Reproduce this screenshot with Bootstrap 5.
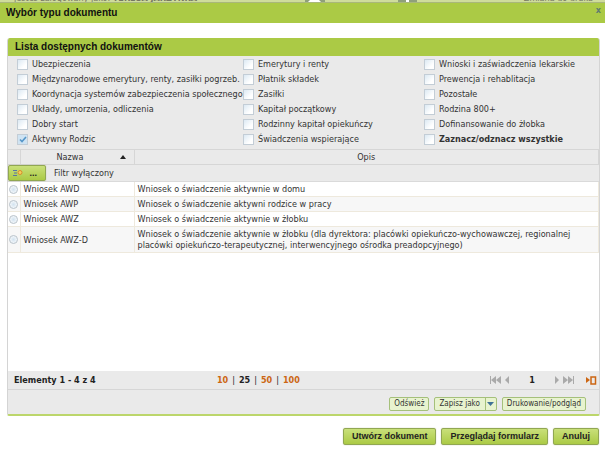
<!DOCTYPE html>
<html lang="pl">
<head>
<meta charset="utf-8">
<meta name="viewport" content="width=device-width, initial-scale=1">
<title>Wybór typu dokumentu</title>
<link rel="stylesheet" href="https://cdn.jsdelivr.net/npm/bootstrap@5.3.0/dist/css/bootstrap.min.css">
<style>
body{font:9px/11px "DejaVu Sans Condensed","DejaVu Sans",sans-serif;color:#333;background:#fff}
.backdrop-strip{height:3px;background:#cfdc9c;color:#75795f;line-height:8px;padding:0 12px 0 14px;border-bottom:1px solid #a9b77b}
.dialog-title{height:20px;background:#abca45;color:#111;padding:0 4px 0 6px}
.dialog-title h1,.panel-title{font:700 10px/18px "Liberation Sans",sans-serif;margin:0}
.dialog-title h1{line-height:20px}
.close-x{font-size:9px;line-height:14px;color:#5f7a70}
.doc-panel{margin:15px 5px 0 7px;border:1px solid #d4d4d4;border-top:0;border-bottom:2px solid #bcd66b;border-radius:3px 3px 2px 2px;overflow:hidden;background:#eaeaea}
.doc-panel .panel-title{background:#abca45;color:#111;padding:0 7px}
.type-grid{display:grid;grid-template-columns:226fr 181fr 175fr;padding:1px 0 2px 9px}
.type-grid label{display:flex;align-items:center;gap:4px;height:15px;white-space:nowrap}
.tick{appearance:none;flex:none;width:11px;height:11px;margin:0;border:1px solid #c3cdd6;background:linear-gradient(135deg,#dce9f3,#fff 70%)}
.tick:checked{background:#cfe3f2 url("data:image/svg+xml,%3Csvg xmlns='http://www.w3.org/2000/svg' viewBox='0 0 9 9'%3E%3Cpath d='M2 4.5l2 2 4-4.5' fill='none' stroke='%235596c8' stroke-width='1.6'/%3E%3C/svg%3E")}
.doc-table{table-layout:fixed;width:100%;background:#fff;margin:0}
.doc-table th{height:15px;background:#eaeaea;border:1px solid #d6d6d6;border-left-width:0;font-weight:400;text-align:center;padding:0;line-height:12px}
.doc-table td{border:1px solid #eee9dd;border-left-width:0;padding:2px 3px 1px;line-height:11px}
.doc-table tbody tr:nth-child(even) td{background:#f7f7f7}
.doc-table .pick{padding:0;text-align:center;vertical-align:middle}
.doc-table .filter-cell{background:#eaeaea;border:0;border-bottom:1px solid #dadada;padding:0}
.c-pick{width:12px}.c-name{width:114px}
.pick input{appearance:none;display:block;width:9px;height:9px;margin:0 auto;border:1px solid #b9c3cb;border-radius:50%;background:radial-gradient(#d2e2ef,#fff)}
.green-btn{border:1px solid #91a752;border-radius:2px;background:linear-gradient(#c9e07a,#abca45);color:#222;font:700 9px/13px "Liberation Sans",sans-serif;padding:1px 8px;box-shadow:0 0 1px #9aa56d}
.filter-btn{width:38px;height:16px;padding:0 8px 0 4px;margin-right:8px}
.pager{height:19px;background:#eaeaea;border-bottom:1px solid #d6d6d6;color:#222;font-weight:700;padding:0 2px 0 6px;display:grid;grid-template-columns:204fr 275fr auto;align-items:center}
.pager a{color:#cc6613;text-decoration:none}
.sizes{display:flex;gap:4px}
.sizes i{font-style:normal;font-weight:400}
.cur{padding:0 20px}
.plain{border:0;background:none;padding:0;display:flex}
.pager .plain{color:#aaa}
.pager .jump{margin-left:12px}
.tools{height:24px;padding-right:13px;gap:5px}
.light-btn{border:1px solid #a5c07b;border-radius:2px;background:#e8f3cf;color:#333;font-size:8px;line-height:12px;padding:0 4px;height:14px}
.light-btn.split{padding-right:0;gap:5px}
.actions{padding:12px 6px 4px 0;gap:5px}
</style>
<script src="https://cdn.jsdelivr.net/npm/bootstrap@5.3.0/dist/js/bootstrap.bundle.min.js"></script>
</head>
<body class="min-vh-100 d-flex flex-column">
<div class="backdrop-strip d-flex justify-content-between align-items-end overflow-hidden"><span>jesteś zalogowany jako: <b>TERESA JARZYNKA</b></span><svg width="112" height="2" viewBox="0 0 112 2"><path d="M0 0h20v2H0zM93 0h19v2H93z" fill="#8fa07a"/><path d="M5 0h9l2 2H3zM101 0h3v2h-3z" fill="#fff"/></svg><span>Zmiana do druku</span></div>
<header class="dialog-title d-flex justify-content-between align-items-start"><h1>Wybór typu dokumentu</h1><button class="plain close-x" type="button" aria-label="Zamknij"><b>x</b></button></header>
<main class="doc-panel flex-grow-1 d-flex flex-column">
<h2 class="panel-title">Lista dostępnych dokumentów</h2>
<div class="type-grid">
<label><input class="tick" type="checkbox">Ubezpieczenia</label><label><input class="tick" type="checkbox">Emerytury i renty</label><label><input class="tick" type="checkbox">Wnioski i zaświadczenia lekarskie</label>
<label><input class="tick" type="checkbox">Międzynarodowe emerytury, renty, zasiłki pogrzeb.</label><label><input class="tick" type="checkbox">Płatnik składek</label><label><input class="tick" type="checkbox">Prewencja i rehablitacja</label>
<label><input class="tick" type="checkbox">Koordynacja systemów zabezpieczenia społecznego</label><label><input class="tick" type="checkbox">Zasiłki</label><label><input class="tick" type="checkbox">Pozostałe</label>
<label><input class="tick" type="checkbox">Układy, umorzenia, odliczenia</label><label><input class="tick" type="checkbox">Kapitał początkowy</label><label><input class="tick" type="checkbox">Rodzina 800+</label>
<label><input class="tick" type="checkbox">Dobry start</label><label><input class="tick" type="checkbox">Rodzinny kapitał opiekuńczy</label><label><input class="tick" type="checkbox">Dofinansowanie do żłobka</label>
<label><input class="tick" type="checkbox" checked>Aktywny Rodzic</label><label><input class="tick" type="checkbox">Świadczenia wspierające</label><label><input class="tick" type="checkbox"><b>Zaznacz/odznacz wszystkie</b></label>
</div>
<div class="flex-grow-1 bg-white">
<table class="doc-table">
<colgroup><col class="c-pick"><col class="c-name"><col></colgroup>
<thead><tr><th></th><th><span class="d-flex align-items-center"><span class="flex-grow-1">Nazwa</span><svg class="me-2" width="6" height="4" viewBox="0 0 6 4"><path d="M0 4L3 0L6 4z" fill="#222"/></svg></span></th><th>Opis</th></tr>
<tr><td colspan="3" class="filter-cell"><div class="d-flex align-items-center"><button type="button" class="green-btn filter-btn d-flex align-items-center justify-content-between"><svg width="10" height="8" viewBox="0 0 10 8"><path d="M0 1.5h4M1 4h3M0 6.500h4" stroke="#5a75a0" stroke-width="1.2"/><circle cx="7" cy="3.5" r="2" fill="#f4cf5a" stroke="#d88b2c"/></svg>...</button>Filtr wyłączony</div></td></tr></thead>
<tbody>
<tr><td class="pick"><input type="radio" name="doc" aria-label="AWD"></td><td>Wniosek AWD</td><td>Wniosek o świadczenie aktywnie w domu</td></tr>
<tr><td class="pick"><input type="radio" name="doc" aria-label="AWP"></td><td>Wniosek AWP</td><td>Wniosek o świadczenie aktywni rodzice w pracy</td></tr>
<tr><td class="pick"><input type="radio" name="doc" aria-label="AWZ"></td><td>Wniosek AWZ</td><td>Wniosek o świadczenie aktywnie w żłobku</td></tr>
<tr><td class="pick"><input type="radio" name="doc" aria-label="AWZ-D"></td><td class="align-middle">Wniosek AWZ-D</td><td>Wniosek o świadczenie aktywnie w żłobku (dla dyrektora: placówki opiekuńczo-wychowawczej, regionalnej placówki opiekuńczo-terapeutycznej, interwencyjnego ośrodka preadopcyjnego)</td></tr>
</tbody></table></div>
<div class="pager"><span>Elementy 1 - 4 z 4</span><span class="sizes"><a href="#">10</a><i>|</i><span>25</span><i>|</i><a href="#">50</a><i>|</i><a href="#">100</a></span>
<span class="d-flex align-items-center">
<button class="plain" type="button" aria-label="Pierwsza"><svg width="11" height="8" viewBox="0 0 11 8" fill="currentColor"><path d="M0 0h1v8H0zM6 0v8L1 4zM11 0v8L6 4z"/></svg></button>
<button class="plain ms-1" type="button" aria-label="Poprzednia"><svg width="4" height="8" viewBox="0 0 4 8" fill="currentColor"><path d="M4 0v8L0 4z"/></svg></button>
<span class="cur">1</span>
<button class="plain" type="button" aria-label="Następna"><svg width="4" height="8" viewBox="0 0 4 8" fill="currentColor"><path d="M0 0v8l4-4z"/></svg></button>
<button class="plain ms-1" type="button" aria-label="Ostatnia"><svg width="11" height="8" viewBox="0 0 11 8" fill="currentColor"><path d="M10 0h1v8h-1zM5 0v8l5-4zM0 0v8l5-4z"/></svg></button>
<button class="plain jump" type="button" aria-label="Idź do strony"><svg width="11" height="9" viewBox="0 0 11 9"><path d="M0 1v6l4-3z" fill="#cc6613"/><path d="M5 1h4.500v7H5z" fill="none" stroke="#cc6613" stroke-width="1.500"/></svg></button></span></div>
<div class="tools d-flex justify-content-end align-items-center pt-1"><button class="light-btn" type="button">Odśwież</button><button class="light-btn split d-flex" type="button">Zapisz jako<svg width="11" height="12" viewBox="0 0 11 12"><path d="M.5 0v12" stroke="#a5c07b"/><path d="M2 4h7L5.500 8z" fill="#3f7196"/></svg></button><button class="light-btn" type="button">Drukowanie/podgląd</button></div>
</main>
<footer class="actions d-flex justify-content-end"><button class="green-btn" type="button">Utwórz dokument</button><button class="green-btn" type="button">Przeglądaj formularz</button><button class="green-btn" type="button">Anuluj</button></footer>
</body></html>
